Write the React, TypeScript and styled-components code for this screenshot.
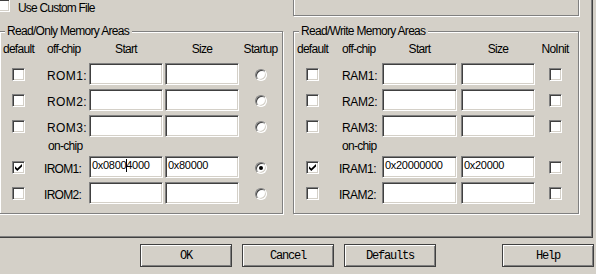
import styled, { createGlobalStyle } from "styled-components";

const GlobalStyle = createGlobalStyle`
  html, body {
    margin: 0;
    padding: 0;
    background: #d4d0c8;
  }
  body {
    font-family: "Liberation Sans", Arial, sans-serif;
    font-size: 12px;
    letter-spacing: -0.7px;
    color: #000;
  }
`;

type Cols = {
  check: number;
  label: number;
  start: number;
  gap: number;
  size: number;
  tail: number;
};

type Area = {
  name: string;
  pad: number;
  ls: number;
  def?: boolean;
  start?: string;
  size?: string;
  caret?: number;
  on?: boolean;
};

const ROM_COLS: Cols = { check: 37, label: 52, start: 74, gap: 2, size: 74, tail: 43 };
const RAM_COLS: Cols = { check: 37, label: 51, start: 75, gap: 4, size: 74, tail: 40 };

const ROM_OFF: Area[] = [
  { name: "ROM1:", pad: 10, ls: 0.4 },
  { name: "ROM2:", pad: 10, ls: 0.4 },
  { name: "ROM3:", pad: 10, ls: 0.4 },
];
const ROM_ON: Area[] = [
  { name: "IROM1:", pad: 7, ls: -0.7, def: true, start: "0x08004000", caret: 6, size: "0x80000", on: true },
  { name: "IROM2:", pad: 7, ls: -0.7 },
];
const RAM_OFF: Area[] = [
  { name: "RAM1:", pad: 11, ls: -0.3 },
  { name: "RAM2:", pad: 11, ls: -0.3 },
  { name: "RAM3:", pad: 11, ls: -0.3 },
];
const RAM_ON: Area[] = [
  { name: "IRAM1:", pad: 8, ls: -0.5, def: true, start: "0x20000000", size: "0x20000" },
  { name: "IRAM2:", pad: 8, ls: -0.5 },
];

const Window = styled.div`
  width: 596px;
  height: 274px;
  overflow: hidden;
  background: #d4d0c8;
`;

const TabPage = styled.div`
  display: flex;
  flex-direction: column;
  width: 601px;
  box-sizing: border-box;
  margin: -20px 0 0 -8px;
  padding: 0 13px 23px 7px;
  border-right: 1px solid #404040;
  border-bottom: 1px solid #404040;
  box-shadow: inset -1px -1px #808080;
`;

const TopRow = styled.div`
  display: flex;
  align-items: flex-end;
  height: 36px;
`;

const CustomFile = styled.label`
  display: flex;
  align-items: flex-start;
  gap: 8px;
  margin: 0 0 1px -2px;
  line-height: 14px;
  letter-spacing: -0.8px;
`;

const CustomText = styled.span`
  padding-top: 2px;
`;

const Etched = styled.div<{ $w: number }>`
  position: relative;
  width: ${(p) => p.$w}px;
  box-sizing: border-box;
  border: 1px solid #808080;
  box-shadow: inset 1px 1px #fff, 1px 1px #fff;
`;

const UpperBox = styled(Etched)`
  height: 36px;
  margin-left: auto;
`;

const GroupsRow = styled.div`
  display: flex;
  gap: 10px;
  margin-top: 15px;
`;

const Group = styled(Etched)`
  display: flex;
  flex-direction: column;
  padding: 10px 0 9px;
`;

const Legend = styled.span`
  position: absolute;
  top: -8px;
  left: 5px;
  padding: 0 3px 0 2px;
  line-height: 14px;
  background: #d4d0c8;
`;

const HeadRow = styled.div`
  display: flex;
  height: 14px;
  line-height: 14px;
  margin-bottom: 7px;
`;

const Head = styled.div<{ $w: number; $pad?: number; $left?: boolean; $ml?: number }>`
  width: ${(p) => p.$w}px;
  margin-left: ${(p) => p.$ml ?? 0}px;
  padding-left: ${(p) => p.$pad ?? 0}px;
  box-sizing: border-box;
  text-align: ${(p) => (p.$left ? "left" : "center")};
  white-space: nowrap;
`;

const Row = styled.div`
  display: flex;
  align-items: center;
  height: 22px;
  & + & {
    margin-top: 4px;
  }
`;

const Cell = styled.div<{ $w: number }>`
  display: flex;
  justify-content: center;
  width: ${(p) => p.$w}px;
`;

const Label = styled.div<{ $w: number; $pad: number; $ls: number }>`
  align-self: stretch;
  width: ${(p) => p.$w}px;
  box-sizing: border-box;
  padding: 6px 0 0 ${(p) => p.$pad}px;
  font-size: 12px;
  line-height: 14px;
  letter-spacing: ${(p) => p.$ls}px;
  white-space: nowrap;
`;

const OnChip = styled.div`
  height: 14px;
  line-height: 14px;
  margin: 2px 0 3px 48px;
`;

const Edit = styled.div<{ $w: number; $ml?: number }>`
  width: ${(p) => p.$w}px;
  height: 22px;
  margin-left: ${(p) => p.$ml ?? 0}px;
  box-sizing: border-box;
  padding: 2px 2px 0;
  background: #fff;
  border: 1px solid;
  border-color: #808080 #fff #fff #808080;
  box-shadow: inset 1px 1px #404040, inset -1px -1px #d4d0c8;
  font-size: 11px;
  letter-spacing: -0.3px;
  line-height: 13px;
  white-space: nowrap;
  overflow: hidden;
`;

const Caret = styled.span`
  display: inline-block;
  width: 1px;
  height: 13px;
  margin-right: -1px;
  vertical-align: top;
  background: #000;
`;

const CheckBox = styled.span`
  display: inline-flex;
  align-items: center;
  justify-content: center;
  flex: none;
  width: 13px;
  height: 13px;
  box-sizing: border-box;
  background: #fff;
  border: 1px solid;
  border-color: #808080 #fff #fff #808080;
  box-shadow: inset 1px 1px #404040, inset -1px -1px #d4d0c8;
`;

const Radio = styled.span<{ $on?: boolean }>`
  display: inline-flex;
  align-items: center;
  justify-content: center;
  width: 12px;
  height: 12px;
  margin-top: 2px;
  box-sizing: border-box;
  border-radius: 50%;
  background: #fff;
  border: 1px solid;
  border-color: #808080 #fff #fff #808080;
  box-shadow: inset 1px 1px #404040, inset -1px -1px #d4d0c8;

  &::after {
    content: "";
    display: ${(p) => (p.$on ? "block" : "none")};
    width: 4px;
    height: 4px;
    border-radius: 50%;
    background: #000;
  }
`;

const ButtonRow = styled.div`
  display: flex;
  gap: 10px;
  margin-top: 6px;
  padding-left: 140px;
`;

const Button = styled.button<{ $ml?: number }>`
  width: 92px;
  height: 23px;
  margin-left: ${(p) => p.$ml ?? 0}px;
  padding: 0;
  box-sizing: border-box;
  background: #d4d0c8;
  border: 1px solid #404040;
  box-shadow: inset 1px 1px #fff, inset -1px -1px #808080;
  font-family: "Liberation Mono", "Courier New", monospace;
  font-size: 12px;
  letter-spacing: -1.2px;
  color: #000;
`;

function Check({ checked }: { checked?: boolean }) {
  return (
    <CheckBox>
      {checked && (
        <svg width="7" height="7" viewBox="0 0 7 7">
          <path d="M0 2.2 L2.3 4.4 L7 0 L7 2.4 L2.3 7 L0 4.7 Z" fill="#000" />
        </svg>
      )}
    </CheckBox>
  );
}

function AreaRow({ area, cols, tail }: { area: Area; cols: Cols; tail: "radio" | "check" }) {
  const start = area.start ?? "";
  return (
    <Row>
      <Cell $w={cols.check}>
        <Check checked={area.def} />
      </Cell>
      <Label $w={cols.label} $pad={area.pad} $ls={area.ls}>
        {area.name}
      </Label>
      <Edit $w={cols.start}>
        {area.caret !== undefined ? (
          <>
            {start.slice(0, area.caret)}
            <Caret />
            {start.slice(area.caret)}
          </>
        ) : (
          start
        )}
      </Edit>
      <Edit $w={cols.size} $ml={cols.gap}>
        {area.size}
      </Edit>
      <Cell $w={cols.tail}>{tail === "radio" ? <Radio $on={area.on} /> : <Check />}</Cell>
    </Row>
  );
}

function MemoryGroup({
  title,
  width,
  cols,
  tailHead,
  tail,
  offChip,
  onChip,
}: {
  title: string;
  width: number;
  cols: Cols;
  tailHead: string;
  tail: "radio" | "check";
  offChip: Area[];
  onChip: Area[];
}) {
  return (
    <Group $w={width}>
      <Legend>{title}</Legend>
      <HeadRow>
        <Head $w={cols.check}>default</Head>
        <Head $w={cols.label} $pad={offChip[0].pad} $left>
          off-chip
        </Head>
        <Head $w={cols.start}>Start</Head>
        <Head $w={cols.size} $ml={cols.gap}>
          Size
        </Head>
        <Head $w={cols.tail}>{tailHead}</Head>
      </HeadRow>
      <div>
        {offChip.map((a) => (
          <AreaRow key={a.name} area={a} cols={cols} tail={tail} />
        ))}
      </div>
      <OnChip>on-chip</OnChip>
      <div>
        {onChip.map((a) => (
          <AreaRow key={a.name} area={a} cols={cols} tail={tail} />
        ))}
      </div>
    </Group>
  );
}

export default function App() {
  return (
    <Window>
      <GlobalStyle />
      <TabPage>
        <TopRow>
          <CustomFile>
            <Check />
            <CustomText>Use Custom File</CustomText>
          </CustomFile>
          <UpperBox $w={286} />
        </TopRow>
        <GroupsRow>
          <MemoryGroup
            title="Read/Only Memory Areas"
            width={284}
            cols={ROM_COLS}
            tailHead="Startup"
            tail="radio"
            offChip={ROM_OFF}
            onChip={ROM_ON}
          />
          <MemoryGroup
            title="Read/Write Memory Areas"
            width={286}
            cols={RAM_COLS}
            tailHead="NoInit"
            tail="check"
            offChip={RAM_OFF}
            onChip={RAM_ON}
          />
        </GroupsRow>
      </TabPage>
      <ButtonRow>
        <Button>OK</Button>
        <Button>Cancel</Button>
        <Button>Defaults</Button>
        <Button $ml={56}>Help</Button>
      </ButtonRow>
    </Window>
  );
}
